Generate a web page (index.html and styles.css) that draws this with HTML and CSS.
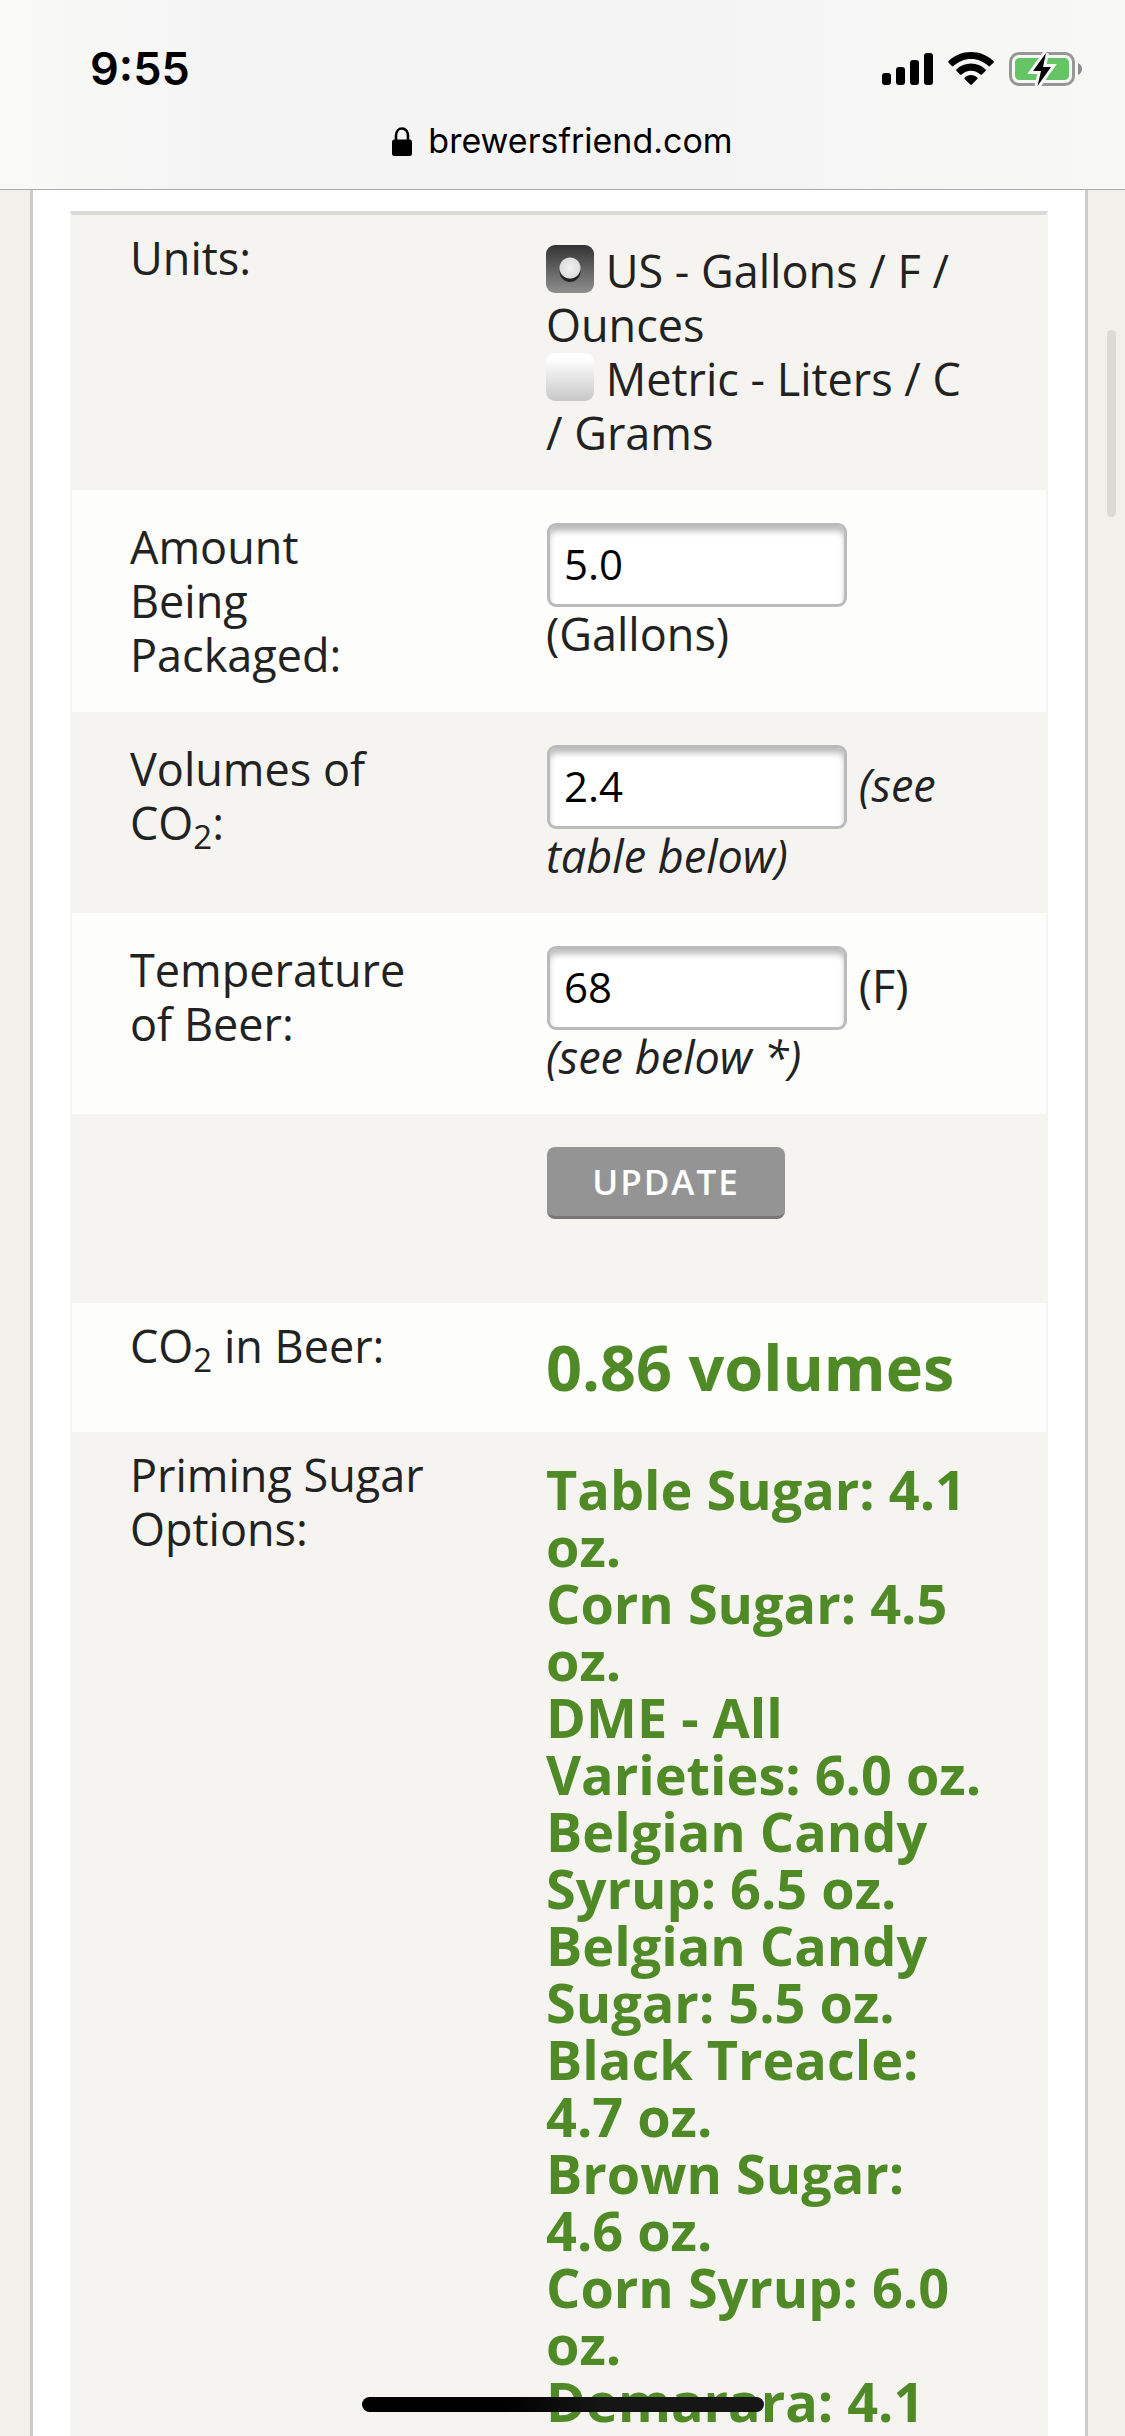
FILE: index.html
```html
<!DOCTYPE html>
<html lang="en">
<head>
    <meta charset="UTF-8">
    <meta name="viewport" content="width=device-width, initial-scale=1.0">
    <title>Beer Priming Calculator</title>
    <link rel="stylesheet" href="styles.css">
</head>
<body>
    <header class="browser-bar">
        <div class="status">
            <span class="time">9:55</span>
            <div class="status-icons">
                <svg class="signal" width="51" height="34" viewBox="0 0 51 34">
                    <rect x="0" y="21" width="9" height="12" rx="3"/>
                    <rect x="14" y="15" width="9" height="18" rx="3"/>
                    <rect x="28" y="8" width="9" height="25" rx="3"/>
                    <rect x="42" y="1" width="9" height="32" rx="3"/>
                </svg>
                <svg class="wifi" width="46" height="34" viewBox="0 0 46 34">
                    <path d="M23 0C14.300 0 6.400 3.400 .6 9c-.5.5-.5 1.200 0 1.700l3.300 3.400c.5.5 1.100.5 1.600 0C10.100 9.700 16.200 7 23 7s12.900 2.700 17.500 7.100c.5.5 1.100.5 1.600 0l3.300-3.400c.5-.5.5-1.200 0-1.700C39.600 3.400 31.700 0 23 0z"/>
                    <path d="M23 11.500c-5.600 0-10.600 2.200-14.400 5.800-.5.5-.5 1.200 0 1.700l3.400 3.400c.5.5 1.100.5 1.600 0 2.500-2.300 5.800-3.700 9.400-3.700s6.900 1.400 9.400 3.700c.5.5 1.100.5 1.600 0l3.400-3.400c.5-.5.5-1.200 0-1.700-3.800-3.600-8.800-5.800-14.400-5.800z"/>
                    <path d="M23 23c-2.500 0-4.700.9-6.300 2.500-.5.5-.5 1.100 0 1.600l5.500 5.500c.5.5 1.100.5 1.600 0l5.500-5.500c.5-.5.5-1.100 0-1.600C27.700 23.900 25.500 23 23 23z"/>
                </svg>
                <svg class="battery" width="74" height="34" viewBox="0 0 74 34">
                    <rect x="1.500" y="1.500" width="63" height="31" rx="8.500" fill="none" stroke="#979797" stroke-width="3"/>
                    <path d="M69 11c2.400 1 4 3.400 4 6s-1.600 5-4 6z" fill="#8b8b8b"/>
                    <rect x="6" y="6" width="54" height="22" rx="4.500" fill="#65c466"/>
                    <path d="M37 1L24 19h8l-3.500 15L42 15h-8z" fill="#000" stroke="#f6f6f6" stroke-width="6"/>
                    <path d="M37 1L24 19h8l-3.500 15L42 15h-8z" fill="#000"/>
                </svg>
            </div>
        </div>
        <div class="address">
            <svg width="20" height="29" viewBox="0 0 20 29">
                <path d="M4 14V8.500C4 4.500 6.500 1.500 10 1.500s6 3 6 7V14" fill="none" stroke="#000" stroke-width="2.600"/>
                <rect x="0" y="12.500" width="20" height="16.500" rx="2.500"/>
            </svg>
            <span>brewersfriend.com</span>
        </div>
    </header>

    <main>
        <form>
            <table class="calculator">
                <colgroup>
                    <col class="col-label">
                    <col>
                </colgroup>
                <tbody>
                    <tr>
                        <th scope="row">Units:</th>
                        <td>
                            <input type="radio" name="units" id="units-us" checked>
                            <label for="units-us">US - Gallons / F / Ounces</label><br>
                            <input type="radio" name="units" id="units-metric">
                            <label for="units-metric">Metric - Liters / C / Grams</label>
                        </td>
                    </tr>
                    <tr class="field">
                        <th scope="row"><label for="amount">Amount<br>Being<br>Packaged:</label></th>
                        <td><input type="text" id="amount" value="5.0"> (Gallons)</td>
                    </tr>
                    <tr class="field">
                        <th scope="row"><label for="volumes">Volumes of CO<sub>2</sub>:</label></th>
                        <td><input type="text" id="volumes" value="2.4"> <em>(see table below)</em></td>
                    </tr>
                    <tr class="field">
                        <th scope="row"><label for="temperature">Temperature of Beer:</label></th>
                        <td><input type="text" id="temperature" value="68"> (F) <em>(see below *)</em></td>
                    </tr>
                    <tr class="submit">
                        <th></th>
                        <td><button type="button">UPDATE</button></td>
                    </tr>
                    <tr>
                        <th scope="row">CO<sub>2</sub> in Beer:</th>
                        <td class="volumes">0.86 volumes</td>
                    </tr>
                    <tr>
                        <th scope="row">Priming Sugar Options:</th>
                        <td class="sugars">
                            Table Sugar: 4.1 oz.<br>
                            Corn Sugar: 4.5 oz.<br>
                            DME - All Varieties: 6.0 oz.<br>
                            Belgian Candy Syrup: 6.5 oz.<br>
                            Belgian Candy Sugar: 5.5 oz.<br>
                            Black Treacle: 4.7 oz.<br>
                            Brown Sugar: 4.6 oz.<br>
                            Corn Syrup: 6.0 oz.<br>
                            Demarara: 4.1
                        </td>
                    </tr>
                </tbody>
            </table>
        </form>
    </main>

    <div class="scroll-thumb"></div>
    <div class="home-indicator"></div>
</body>
</html>
```
FILE: styles.css
```css
* {
    box-sizing: border-box;
}
body {
    display: flex;
    flex-direction: column;
    height: 100vh;
    margin: 0;
    overflow: hidden;
    background-color: #f1f0eb;
    color: #222;
    font-family: "Open Sans", sans-serif;
    font-size: 45px;
    line-height: 54px;
}

/* Browser bar */
.browser-bar {
    flex: none;
    height: 190px;
    padding-top: 42px;
    background: linear-gradient(to right, #f9f9f8, #f4f4f4 20%, #f4f4f4 60%, #f8f8f7);
    border-bottom: 1px solid #acacac;
    color: #000;
    font-family: Inter, sans-serif;
}
.status {
    display: flex;
    justify-content: space-between;
    align-items: center;
    padding: 0 42px 0 90px;
}
.time {
    font-weight: 600;
}
.status-icons {
    display: flex;
    gap: 15px;
}
.address {
    display: flex;
    justify-content: center;
    align-items: center;
    gap: 16px;
    margin-top: 18px;
    font-size: 34px;
}

/* Page */
main {
    flex: 1;
    margin: 0 37px 0 30px;
    padding: 0 37px;
    background-color: #fff;
    border: solid #ccc;
    border-width: 0 3px;
}
.calculator {
    width: 100%;
    margin-top: 21px;
    table-layout: fixed;
    border-spacing: 0;
    border: 2px solid #f5f4f0;
    border-top: 4px solid #d9d9d7;
    border-bottom: 0;
}
.col-label {
    width: 416px;
}
tr:nth-child(odd) {
    background-color: #f5f4f0;
}
tr:nth-child(even) {
    background-color: #fdfdfb;
}
th,
td {
    padding: 29px 58px 30px;
    text-align: left;
    vertical-align: top;
}
th {
    padding-top: 16px;
    padding-bottom: 16px;
    font-weight: normal;
}
.field th {
    padding-top: 30px;
    padding-bottom: 30px;
}
.submit td {
    padding-bottom: 84px;
}
sub {
    font-size: 33px;
    line-height: 0;
    vertical-align: -9px;
}

/* Controls */
input[type="text"] {
    width: 300px;
    height: 84px;
    margin: 4px 0 0 1px;
    padding: 0 14px 3px;
    background-color: #fff;
    border: 3px solid #bbb;
    border-radius: 9px;
    box-shadow: inset 0 6px 6px -1px #bbb;
    color: #000;
    font-family: inherit;
    font-size: 42px;
}
input[type="radio"] {
    appearance: none;
    width: 48px;
    height: 48px;
    margin: 0;
    vertical-align: -5px;
    background: linear-gradient(#fff 10%, #c8c8c8);
    border-radius: 9px;
}
input[type="radio"]:checked {
    background:
        radial-gradient(circle at 50% 48%, #f2f2f2 0, #dcdcdc 10px, transparent 11px),
        radial-gradient(circle at 50% 55%, #222 10px, transparent 11px),
        linear-gradient(#333, #8f8f8f);
}
button {
    display: block;
    width: 238px;
    height: 72px;
    margin: 4px 0 0 1px;
    padding: 0;
    background-color: #949494;
    border: 0;
    border-bottom: 3px solid #777;
    border-radius: 8px;
    color: #fff;
    font-family: inherit;
    font-size: 35px;
    font-weight: 600;
    letter-spacing: 2px;
}

/* Results */
.volumes,
.sugars {
    color: #4f8a27;
    font-weight: bold;
}
.volumes {
    font-size: 63px;
    line-height: 70px;
}
.sugars {
    font-size: 54px;
    line-height: 57px;
}

/* Overlays */
.scroll-thumb {
    position: fixed;
    top: 330px;
    right: 9px;
    width: 9px;
    height: 187px;
    background-color: #dbdad6;
    border-radius: 5px;
}
.home-indicator {
    position: fixed;
    bottom: 24px;
    left: 50%;
    width: 402px;
    height: 15px;
    margin-left: -201px;
    background: linear-gradient(to right, #000 35%, #161616 60%);
    border-radius: 8px;
}
```
